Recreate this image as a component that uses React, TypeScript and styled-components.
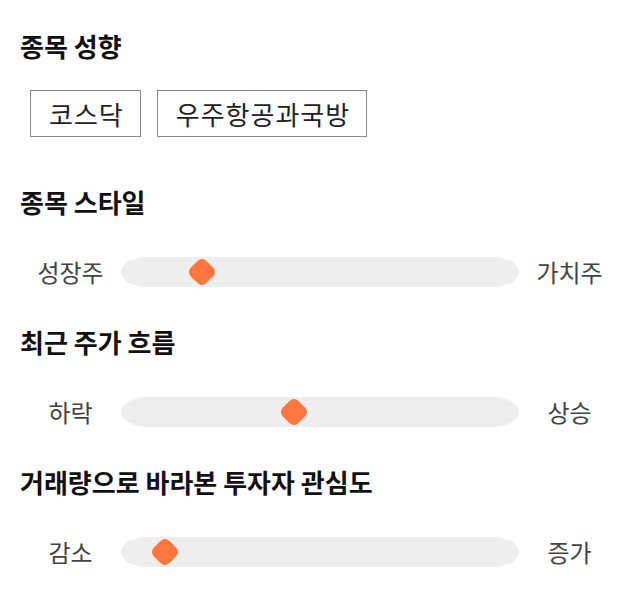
import React from 'react';
import styled, {createGlobalStyle} from 'styled-components';

const GlobalStyle = createGlobalStyle`
  body {
    margin: 0;
    background: #fff;
    font-family: "Noto Sans CJK KR", "Noto Sans", sans-serif;
  }
`

type SliderType = {
    title: string
    left: string
    right: string
    value: number
}

const sliders: SliderType[] = [
    {title: '종목 스타일', left: '성장주', right: '가치주', value: 0.18},
    {title: '최근 주가 흐름', left: '하락', right: '상승', value: 0.43},
    {title: '거래량으로 바라본 투자자 관심도', left: '감소', right: '증가', value: 0.08},
]

const tags = ['코스닥', '우주항공과국방']

const Page = styled.main`
  width: 600px;
  padding: 32px 20px 0;
`

const Section = styled.section<{ $gap: number, $after: number }>`
  display: flex;
  flex-direction: column;
  gap: ${p => p.$gap}px;
  margin-bottom: ${p => p.$after}px;
`

const Title = styled.h2`
  margin: 0;
  font-size: 26px;
  line-height: 28px;
  font-weight: 700;
  color: #111;
`

const TagList = styled.div`
  display: flex;
  gap: 16px;
  padding-left: 10px;
`

const Tag = styled.div`
  height: 47px;
  box-sizing: border-box;
  padding: 0 16px 0 18px;
  border: 1px solid #8a8a8a;
  display: flex;
  align-items: center;
  font-size: 26px;
  letter-spacing: 1px;
  color: #222;
`

const Row = styled.div`
  display: grid;
  grid-template-columns: 101px 398px 101px;
  align-items: center;
  height: 30px;
`

const Label = styled.span`
  text-align: center;
  font-size: 24px;
  color: #444;
`

const Track = styled.div`
  position: relative;
  height: 30px;
  background: #eeeeee;
  border-radius: 26px / 15px;
`

const Thumb = styled.div`
  position: absolute;
  top: 50%;
  width: 22px;
  height: 22px;
  margin-left: -11px;
  margin-top: -11px;
  background: #ff763e;
  border-radius: 6px;
  transform: rotate(45deg);
`

const THUMB = 30

const App: React.FC = () => {
    return (
        <Page>
            <GlobalStyle/>
            <Section $gap={30} $after={51}>
                <Title>종목 성향</Title>
                <TagList>
                    {tags.map(t => <Tag key={t}>{t}</Tag>)}
                </TagList>
            </Section>
            {sliders.map(s => (
                <Section $gap={38} $after={44} key={s.title}>
                    <Title>{s.title}</Title>
                    <Row>
                        <Label>{s.left}</Label>
                        <Track>
                            <Thumb style={{left: `calc(${THUMB / 2}px + (100% - ${THUMB}px) * ${s.value})`}}/>
                        </Track>
                        <Label>{s.right}</Label>
                    </Row>
                </Section>
            ))}
        </Page>
    );
};

export default App;
